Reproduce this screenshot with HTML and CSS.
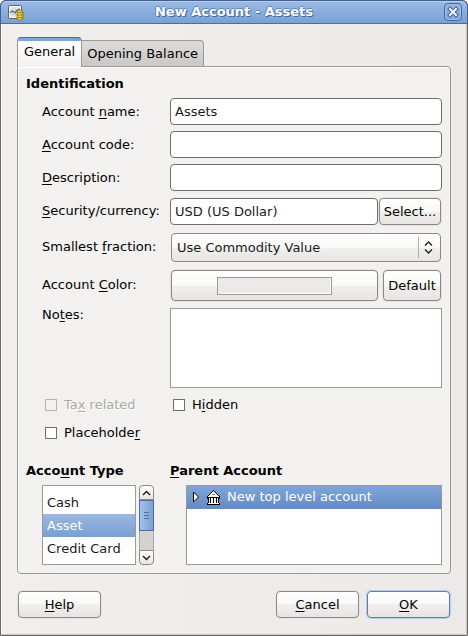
FILE: index.html
```html
<!DOCTYPE html>
<html lang="en">
<head>
<meta charset="utf-8">
<meta name="viewport" content="width=device-width, initial-scale=1">
<title>New Account - Assets</title>
<link rel="stylesheet" href="styles.css">
</head>
<body>
<main class="window">
  <header class="titlebar">
    <svg class="app-icon" width="17" height="17" viewBox="0 0 17 17" aria-hidden="true">
      <rect x="1.500" y="1.500" width="13" height="13" rx="1.500" fill="#dededa" stroke="#62635f"/>
      <path d="M2.500 13.500V2.500h11v11z" fill="#e9e9e6" stroke="#fafaf8"/>
      <path d="M4 6.500h8M4 10.500h8M5.500 4v8M8.500 4v8M11.500 4v8" stroke="#d0d0cc" fill="none"/>
      <path d="M3 9l2-2 2 1 1 1 2-3 3-1" stroke="#4a6fa5" stroke-width="1.300" fill="none"/>
      <rect x="10" y="6" width="6" height="10" rx="2" fill="#d6b622" stroke="#8f7408" stroke-width=".8"/>
      <path d="M10 8.500h6M10 11h6M10 13.500h6" stroke="#9a7e0c" stroke-width=".8"/>
      <path d="M11 7.300h3M11 9.800h3M11 12.300h3M11 14.700h3" stroke="#f5e06a" stroke-width=".9"/>
    </svg>
    <h1 class="title">New Account - Assets</h1>
    <button class="close" type="button" aria-label="Close">
      <svg width="12" height="12" viewBox="0 0 12 12" aria-hidden="true">
        <path d="M3 3l6 6M9 3l-6 6" stroke="#3f6399" stroke-width="4" stroke-linecap="square"/>
        <path d="M3 3l6 6M9 3l-6 6" stroke="#f4f8fd" stroke-width="2" stroke-linecap="square"/>
      </svg>
    </button>
  </header>

  <form class="content">
    <div class="tabs" role="tablist">
      <button class="tab tab-active" type="button" role="tab" aria-selected="true">General</button>
      <button class="tab" type="button" role="tab" aria-selected="false">Opening Balance</button>
    </div>

    <section class="pane" role="tabpanel">
      <h2 class="heading">Identification</h2>
      <div class="fields">
        <label for="name">Account <u>n</u>ame:</label>
        <input class="entry" id="name" type="text" value="Assets">

        <label for="code"><u>A</u>ccount code:</label>
        <input class="entry" id="code" type="text">

        <label for="description"><u>D</u>escription:</label>
        <input class="entry" id="description" type="text">

        <label for="currency"><u>S</u>ecurity/currency:</label>
        <div class="row row-tight">
          <input class="entry" id="currency" type="text" value="USD (US Dollar)">
          <button class="button button-select" type="button">Select...</button>
        </div>

        <label for="fraction">Smallest <u>f</u>raction:</label>
        <div class="combo">
          <select class="combo-select" id="fraction">
            <option>Use Commodity Value</option>
          </select>
          <svg class="combo-arrows" width="9" height="13" viewBox="0 0 9 13" aria-hidden="true">
            <path d="M1 4.500l3.500-3.500L8 4.500M1 8.500L4.500 12 8 8.500" fill="none" stroke="#1a1a1a" stroke-width="1.300"/>
          </svg>
        </div>

        <label for="color">Account <u>C</u>olor:</label>
        <div class="row">
          <button class="button button-color" id="color" type="button"><span class="swatch"></span></button>
          <button class="button button-default" type="button">Default</button>
        </div>

        <label class="label-top" for="notes">No<u>t</u>es:</label>
        <textarea class="notes" id="notes"></textarea>
      </div>

      <div class="checks">
        <label class="check check-disabled"><input type="checkbox" disabled><span>Ta<u>x</u> related</span></label>
        <label class="check"><input type="checkbox"><span>H<u>i</u>dden</span></label>
        <label class="check"><input type="checkbox"><span>Placeholde<u>r</u></span></label>
      </div>

      <div class="lists">
        <section>
          <h2 class="heading" id="type-heading">Acco<u>u</u>nt Type</h2>
          <div class="type-area">
            <ul class="listbox types" role="listbox" aria-labelledby="type-heading" tabindex="0">
              <li role="option">Cash</li>
              <li class="selected" role="option" aria-selected="true">Asset</li>
              <li role="option">Credit Card</li>
            </ul>
            <div class="scrollbar">
              <button class="scroll-button scroll-up" type="button" aria-label="Scroll up">
                <svg width="9" height="6" viewBox="0 0 9 6" aria-hidden="true"><path d="M1 5l3.500-3.500L8 5" fill="none" stroke="#1a1a1a" stroke-width="1.400"/></svg>
              </button>
              <div class="scroll-track"><div class="scroll-thumb"></div></div>
              <button class="scroll-button scroll-down" type="button" aria-label="Scroll down">
                <svg width="9" height="6" viewBox="0 0 9 6" aria-hidden="true"><path d="M1 1l3.500 3.500L8 1" fill="none" stroke="#1a1a1a" stroke-width="1.400"/></svg>
              </button>
            </div>
          </div>
        </section>
        <section>
          <h2 class="heading" id="parent-heading"><u>P</u>arent Account</h2>
          <ul class="listbox parents" role="tree" aria-labelledby="parent-heading" tabindex="0">
            <li class="node" role="treeitem" aria-selected="true" aria-expanded="false">
              <svg width="8" height="12" viewBox="0 0 8 12" aria-hidden="true"><path d="M1.500 1v10L6.500 6z" fill="#fff" stroke="#000"/></svg>
              <svg width="15" height="15" viewBox="0 0 15 15" shape-rendering="crispEdges" aria-hidden="true">
                <path d="M7 0h1v1h1v1h1v1h1v1h1v1h1v1h1v3h-1v4h1v2H1v-2h1V9H1V6h1V5h1V4h1V3h1V2h1V1h1z" fill="#000"/>
                <path d="M7 1h1v1h1v1h1v1h1v1h1v1h1v1H2V6h1V5h1V4h1V3h1V2h1z" fill="#f2f2ec"/>
                <path d="M6 4h3v1H6z" fill="#8a8a84"/>
                <path d="M3 8h1v5H3zM5 8h2v5H5zM8 8h2v5H8zM11 8h1v5h-1z" fill="#f2f2ec"/>
                <path d="M2 13h11v1H2z" fill="#fff"/>
              </svg>
              <span>New top level account</span>
            </li>
          </ul>
        </section>
      </div>
    </section>

    <footer class="actions">
      <button class="button action" type="button"><span><u>H</u>elp</span></button>
      <button class="button action action-cancel" type="button"><span><u>C</u>ancel</span></button>
      <button class="button action action-ok" type="submit"><span><u>O</u>K</span></button>
    </footer>
  </form>
</main>
</body>
</html>
```
FILE: styles.css
```css
* {
  box-sizing: border-box;
}

body {
  margin: 0;
  background: #fff;
  color: #000;
}

body,
button,
input,
select,
textarea {
  font-family: "DejaVu Sans", sans-serif;
  font-size: 13px;
  line-height: 16px;
}

h1,
h2,
ul {
  margin: 0;
  padding: 0;
  font-size: 13px;
}

ul {
  list-style: none;
}

u {
  text-decoration-thickness: 1px;
  text-underline-offset: 2px;
}

.window {
  display: flex;
  flex-direction: column;
  min-height: 100vh;
  border: 1px solid #6b6866;
  border-radius: 6px 6px 0 0;
  background: linear-gradient(90deg, #f0efed, #ebeae9);
  box-shadow: inset -1px -1px #c9c7c4, inset 1px 0 #fafafa;
}

.titlebar {
  display: flex;
  align-items: center;
  height: 24px;
  margin: -1px -1px 0;
  padding: 0 5px 0 6px;
  border: 1px solid #415f8c;
  border-bottom-color: #4a6fa5;
  border-radius: 6px 6px 0 0;
  background: linear-gradient(#9cbbe6, #7ba0d2);
  box-shadow: inset 0 1px #b4cdf0;
}

.title {
  flex: 1;
  color: #fff;
  text-align: center;
  text-shadow: 1px 1px #4468a0, -1px 0 #5d84bd, 0 -1px #5d84bd;
}

.close {
  display: grid;
  place-items: center;
  width: 18px;
  height: 18px;
  padding: 0;
  border: 1px solid #4167a1;
  border-radius: 4px;
  background: linear-gradient(#92b3e0, #7fa4d5);
  box-shadow: inset 0 0 0 1px #a4c0e8;
}

.content {
  display: flex;
  flex: 1;
  flex-direction: column;
  padding: 13px 16px 17px;
}

.tabs {
  display: flex;
  align-items: flex-end;
}

.tab {
  height: 26px;
  padding: 0 5px;
  border: 1px solid #9c9a97;
  border-bottom: 0;
  border-left: 0;
  border-radius: 0 4px 0 0;
  background: linear-gradient(#dddcda, #c9c8c5);
}

.tab-active {
  position: relative;
  height: 30px;
  margin-bottom: -1px;
  padding: 0 6px 1px;
  border-left: 1px solid #9c9a97;
  border-top: 1px solid #4a6fa5;
  border-radius: 4px 4px 0 0;
  background: linear-gradient(#7fa5d9 3px, #fff 3px, #f2f1ef);
}

.pane {
  padding: 8px;
  border: 1px solid #9c9a97;
  border-radius: 0 4px 4px 4px;
  background: #f2f1ef;
  box-shadow: inset 1px 1px #fff;
}

.heading {
  line-height: 17px;
}

.fields {
  display: grid;
  grid-template-columns: 128px 1fr;
  grid-template-rows: 27px 27px 27px 28px 31px 33px 81px;
  row-gap: 6px;
  align-items: center;
  margin-top: 6px;
  padding-left: 16px;
}

.label-top {
  align-self: start;
}

.entry {
  width: 100%;
  min-width: 0;
  height: 27px;
  padding: 0 4px 1px;
  border: 1px solid #716d69;
  border-radius: 4px;
  background: #fff;
  color: #1a1a1a;
}

.row {
  display: flex;
  align-self: end;
  gap: 5px;
  padding-right: 1px;
}

.row-tight {
  gap: 1px;
}

.row .entry,
.button-color {
  flex: 1;
}

.button {
  display: inline-flex;
  align-items: center;
  justify-content: center;
  height: 27px;
  padding: 0;
  border: 1px solid #8b8885;
  border-radius: 4px;
  background: linear-gradient(#fff, #f8f8f7 50%, #f0efee 50%, #e6e5e3);
  box-shadow: 0 0 0 1px #e6e5e2;
  color: #000;
}

.button-select {
  width: 62px;
}

.button-color {
  height: 31px;
  margin-left: 1px;
}

.button-default {
  width: 58px;
  height: 31px;
}

.swatch {
  width: 115px;
  height: 18px;
  border: 1px solid #9c9a97;
  background: #ebeae8;
  box-shadow: inset -1px -1px #fff;
}

.combo {
  position: relative;
  align-self: end;
  height: 29px;
  padding: 0 1px;
}

.combo-select {
  width: 100%;
  height: 29px;
  padding: 0 30px 0 5px;
  border: 1px solid #8b8885;
  border-radius: 4px;
  appearance: none;
  background:
    linear-gradient(#b0aeab, #b0aeab) right 21px center / 1px 21px no-repeat,
    linear-gradient(#fff, #f8f8f7 50%, #f0efee 50%, #e6e5e3);
  color: #1a1a1a;
}

.combo-arrows {
  position: absolute;
  top: 8px;
  right: 9px;
  pointer-events: none;
}

.notes {
  align-self: end;
  width: 100%;
  height: 80px;
  padding: 4px;
  border: 1px solid #9c9a97;
  border-radius: 0;
  background: #fff;
  resize: none;
}

.checks {
  display: grid;
  grid-template-columns: 128px 1fr;
  grid-auto-rows: 28px;
  margin-top: 3px;
  padding-left: 16px;
}

.check {
  display: flex;
  align-items: center;
  gap: 7px;
  padding-left: 3px;
}

.check input {
  flex: none;
  width: 12px;
  height: 12px;
  margin: 0;
  border: 1px solid #716d69;
  appearance: none;
  background: #fff;
}

.check-disabled {
  color: #aaa8a5;
  text-shadow: 1px 1px #fff;
}

.check-disabled input {
  border-color: #b5b3b0;
  background: #f2f1ef;
}

.lists {
  display: grid;
  grid-template-columns: 128px 1fr;
  column-gap: 16px;
  margin-top: 15px;
}

.type-area {
  display: flex;
  gap: 3px;
  margin-top: 6px;
  padding-left: 16px;
}

.listbox {
  height: 80px;
  border: 1px solid #9c9a97;
  background: #fff;
  overflow: hidden;
}

.types {
  flex: 1;
  padding-top: 5px;
}

.types li {
  height: 23px;
  padding-left: 4px;
  color: #1a1a1a;
  line-height: 23px;
}

.types .selected {
  background: linear-gradient(#9ab8e2, #7a9fd1);
  color: #fff;
}

.scrollbar {
  display: flex;
  flex-direction: column;
  width: 15px;
  height: 80px;
}

.scroll-button {
  display: grid;
  place-items: center;
  height: 15px;
  padding: 0;
  border: 1px solid #8b8885;
  background: linear-gradient(#fff, #e6e5e3);
}

.scroll-up {
  border-radius: 4px 4px 0 0;
}

.scroll-down {
  border-radius: 0 0 4px 4px;
}

.scroll-track {
  flex: 1;
  border: solid #a9a7a4;
  border-width: 0 1px;
  background: #d4d2cf;
}

.scroll-thumb {
  height: 31px;
  margin: 0 -1px;
  border: 1px solid #4a6fa5;
  background:
    linear-gradient(#4a6fa5 1px, transparent 1px 3px, #4a6fa5 3px 4px, transparent 4px 6px, #4a6fa5 6px) center / 5px 7px no-repeat,
    linear-gradient(90deg, #a3c0ea, #7ba0d2);
}

.parents {
  margin-top: 6px;
  margin-left: 16px;
}

.node {
  display: flex;
  align-items: center;
  gap: 6px;
  height: 23px;
  padding: 0 0 1px 5px;
  background: linear-gradient(#7fa5d8, #638bc1);
  color: #fff;
}

.actions {
  display: flex;
  gap: 8px;
  margin-top: 17px;
  padding: 0 1px;
}

.action {
  width: 83px;
}

.action-cancel {
  margin-left: auto;
}

.action-ok {
  border-color: #5b80b5;
  box-shadow: 0 0 0 1px #b9cbe4;
}
```
